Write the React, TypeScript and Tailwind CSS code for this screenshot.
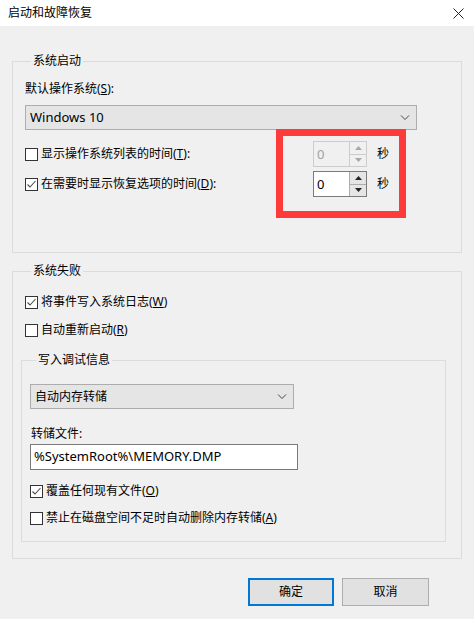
import React from 'react';

const Check = ({ checked }: { checked?: boolean }) => (
  <span className="w-[13px] h-[13px] border border-[#333333] bg-white flex items-center justify-center shrink-0">
    {checked && (
      <svg width="11" height="11" viewBox="0 0 11 11">
        <path d="M1.5 5.5 L4 8 L9.5 2" stroke="#4a4a4a" fill="none" strokeWidth="1.1" />
      </svg>
    )}
  </span>
);

const CheckRow = ({ checked, children }: { checked?: boolean; children: React.ReactNode }) => (
  <div className="flex items-center gap-[3px] h-[16px]">
    <Check checked={checked} />
    <span className="leading-[16px] whitespace-nowrap">{children}</span>
  </div>
);

const Chevron = () => (
  <svg width="10" height="6" viewBox="0 0 10 6">
    <path d="M1 0.5 L5 4.5 L9 0.5" stroke="#444" fill="none" strokeWidth="1" />
  </svg>
);

const Arrow = ({ up, disabled }: { up?: boolean; disabled?: boolean }) => (
  <svg width="7" height="4" viewBox="0 0 7 4">
    <path d={up ? 'M0 4 L3.5 0 L7 4 Z' : 'M0 0 L3.5 4 L7 0 Z'} fill={disabled ? '#a8a8a8' : '#222'} />
  </svg>
);

const Spin = ({ disabled }: { disabled?: boolean }) => (
  <div className={`flex w-[54px] h-[26px] border ${disabled ? 'border-[#cccccc] bg-[#f0f0f0]' : 'border-[#7a7a7a] bg-white'}`}>
    <span className={`flex-1 pl-[3px] leading-[24px] text-[13px] ${disabled ? 'text-[#a0a0a0]' : 'text-black'}`}>0</span>
    <div className="w-[17px] flex flex-col">
      <span className={`flex-1 flex items-center justify-center border-l border-b ${disabled ? 'border-[#cccccc] bg-[#f0f0f0]' : 'border-[#adadad] bg-[#e5e5e5]'}`}>
        <Arrow up disabled={disabled} />
      </span>
      <span className={`flex-1 flex items-center justify-center border-l ${disabled ? 'border-[#cccccc] bg-[#f0f0f0]' : 'border-[#adadad] bg-[#e5e5e5]'}`}>
        <Arrow disabled={disabled} />
      </span>
    </div>
  </div>
);

const App: React.FC = () => {
  return (
    <div className="w-[474px] h-[619px] bg-[#f0f0f0] text-[12px] text-black font-['Noto_Sans','Noto_Sans_CJK_SC',sans-serif] flex flex-col relative overflow-hidden">
      {/* title bar */}
      <div className="h-[26px] bg-white flex items-center justify-between pl-[8px] pr-[10px]">
        <span className="leading-[16px]">启动和故障恢复</span>
        <svg width="11" height="11" viewBox="0 0 11 11">
          <path d="M0.5 0.5 L10.5 10.5 M10.5 0.5 L0.5 10.5" stroke="#222" strokeWidth="1" />
        </svg>
      </div>

      <div className="px-[12px] flex flex-col">
        {/* 系统启动 */}
        <fieldset className="mt-[27px] border border-[#dcdcdc] pl-[12px] pb-[55px]">
          <legend className="ml-[6px] px-[2px] leading-[16px]">系统启动</legend>
          <div className="mt-[12px] leading-[16px]">
            默认操作系统(<u>S</u>):
          </div>
          <div className="mt-[8px] w-[392px] h-[25px] bg-[#e5e5e5] border border-[#adadad] flex items-center justify-between pl-[4px] pr-[6px]">
            <span className="text-[13px]">Windows 10</span>
            <Chevron />
          </div>
          <div className="mt-[11px] flex items-center">
            <div className="w-[288px]">
              <CheckRow>显示操作系统列表的时间(<u>T</u>):</CheckRow>
            </div>
            <Spin disabled />
            <span className="ml-[10px]">秒</span>
          </div>
          <div className="mt-[4px] flex items-center">
            <div className="w-[288px]">
              <CheckRow checked>在需要时显示恢复选项的时间(<u>D</u>):</CheckRow>
            </div>
            <Spin />
            <span className="ml-[10px]">秒</span>
          </div>
        </fieldset>

        {/* 系统失败 */}
        <fieldset className="mt-[10px] border border-[#dcdcdc] pl-[12px] pb-[16px]">
          <legend className="ml-[6px] px-[2px] leading-[16px]">系统失败</legend>
          <div className="mt-[15px]">
            <CheckRow checked>将事件写入系统日志(<u>W</u>)</CheckRow>
          </div>
          <div className="mt-[12px]">
            <CheckRow>自动重新启动(<u>R</u>)</CheckRow>
          </div>

          <fieldset className="mt-[14px] -ml-[4px] w-[425px] border border-[#dcdcdc] pl-[8px] pb-[15px]">
            <legend className="ml-[6px] px-[2px] leading-[16px]">写入调试信息</legend>
            <div className="mt-[16px] w-[264px] h-[25px] bg-[#e5e5e5] border border-[#adadad] flex items-center justify-between pl-[4px] pr-[6px]">
              <span>自动内存转储</span>
              <Chevron />
            </div>
            <div className="mt-[17px] leading-[16px] pl-[1px]">转储文件:</div>
            <div className="mt-[2px] w-[268px] h-[26px] bg-white border border-[#7a7a7a] flex items-center pl-[3px]">
              <span className="text-[13px]">%SystemRoot%\MEMORY.DMP</span>
            </div>
            <div className="mt-[13px]">
              <CheckRow checked>覆盖任何现有文件(<u>O</u>)</CheckRow>
            </div>
            <div className="mt-[11px]">
              <CheckRow>禁止在磁盘空间不足时自动删除内存转储(<u>A</u>)</CheckRow>
            </div>
          </fieldset>
        </fieldset>

        {/* buttons */}
        <div className="mt-[19px] flex justify-end gap-[8px] pr-[33px]">
          <button className="w-[86px] h-[28px] bg-[#e1e1e1] border-2 border-[#0078d7]">确定</button>
          <button className="w-[87px] h-[28px] bg-[#e1e1e1] border border-[#adadad]">取消</button>
        </div>
      </div>

      {/* red highlight */}
      <div className="absolute left-[276px] top-[129px] w-[130px] h-[89px] border-[7px] border-[#fe3b3b]" />
    </div>
  );
};

export default App;
